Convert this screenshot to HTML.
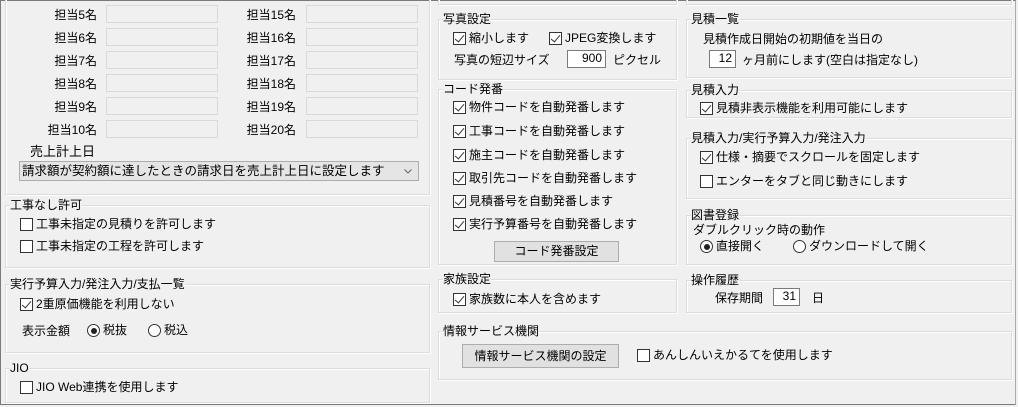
<html><head><style>
body{margin:0;width:1018px;height:407px;background:#f0f0f0;font-family:"Liberation Sans","Noto Sans CJK JP",sans-serif;font-size:12px;color:#000;position:relative;overflow:hidden}
.f{position:absolute;left:0;top:0;width:1016px;height:405px;border:1px solid #7a7a7a;border-right-color:#aaa}
div{position:absolute;box-sizing:border-box}
.g{border:1px solid #dcdcdc;box-shadow:inset 1px 1px 0 #fff,1px 1px 0 #fff}
.t{white-space:nowrap;line-height:14px}
.i{background:#f0f0f0;border:1px solid #d9d9d9;height:18px}
.w{background:#fff;border:1px solid #7a7a7a;text-align:right;padding-right:3px;line-height:15px;height:18px}
.cb{width:13px;height:13px;border:1px solid #333;background:#fff}
.cb.c::after{content:"";position:absolute;left:3px;top:0px;width:4px;height:8px;border:solid #333;border-width:0 1.3px 1.3px 0;transform:rotate(40deg)}
.r{width:13px;height:13px;border:1px solid #333;border-radius:50%;background:#fff}
.r.c::after{content:"";position:absolute;left:2.5px;top:2.5px;width:6px;height:6px;border-radius:50%;background:#222}
.b{background:#e1e1e1;border:1px solid #adadad;text-align:center}
.rt{text-align:right;width:70px}
</style></head><body><div class="f"></div>
<div class="g" style="left:5px;top:-2px;width:425px;height:197px"></div>
<div class="t rt" style="left:27px;top:8px">担当5名</div><div class="i" style="left:106px;top:5px;width:112px"></div>
<div class="t rt" style="left:27px;top:31px">担当6名</div><div class="i" style="left:106px;top:28px;width:112px"></div>
<div class="t rt" style="left:27px;top:54px">担当7名</div><div class="i" style="left:106px;top:51px;width:112px"></div>
<div class="t rt" style="left:27px;top:77px">担当8名</div><div class="i" style="left:106px;top:74px;width:112px"></div>
<div class="t rt" style="left:27px;top:100px">担当9名</div><div class="i" style="left:106px;top:97px;width:112px"></div>
<div class="t rt" style="left:27px;top:123px">担当10名</div><div class="i" style="left:106px;top:120px;width:112px"></div>
<div class="t rt" style="left:226px;top:8px">担当15名</div><div class="i" style="left:306px;top:5px;width:112px"></div>
<div class="t rt" style="left:226px;top:31px">担当16名</div><div class="i" style="left:306px;top:28px;width:112px"></div>
<div class="t rt" style="left:226px;top:54px">担当17名</div><div class="i" style="left:306px;top:51px;width:112px"></div>
<div class="t rt" style="left:226px;top:77px">担当18名</div><div class="i" style="left:306px;top:74px;width:112px"></div>
<div class="t rt" style="left:226px;top:100px">担当19名</div><div class="i" style="left:306px;top:97px;width:112px"></div>
<div class="t rt" style="left:226px;top:123px">担当20名</div><div class="i" style="left:306px;top:120px;width:112px"></div>
<div class="t" style="left:30px;top:145px;font-size:13px">売上計上日</div>
<div class="i" style="left:19px;top:161px;width:400px;height:20px;background:#e5e5e5;border-color:#adadad"><div class="t" style="left:2px;top:2px;font-size:12.5px">請求額が契約額に達したときの請求日を売上計上日に設定します</div><svg style="position:absolute;right:6px;top:7px" width="8" height="5"><path d="M0.5 0.5L4 4L7.5 0.5" fill="none" stroke="#666"/></svg></div>

<div class="g" style="left:5px;top:205px;width:425px;height:63px"></div>
<div class="t" style="left:10px;top:198px;background:#f0f0f0">工事なし許可</div>
<div class="cb" style="left:20px;top:218px"></div><div class="t" style="left:36px;top:217px">工事未指定の見積りを許可します</div>
<div class="cb" style="left:20px;top:240px"></div><div class="t" style="left:36px;top:239px">工事未指定の工程を許可します</div>

<div class="g" style="left:5px;top:284px;width:425px;height:69px"></div>
<div class="t" style="left:10px;top:277px;background:#f0f0f0">実行予算入力/発注入力/支払一覧</div>
<div class="cb c" style="left:20px;top:298px"></div><div class="t" style="left:36px;top:297px">2重原価機能を利用しない</div>
<div class="t" style="left:22px;top:324px">表示金額</div>
<div class="r c" style="left:87px;top:324px"></div><div class="t" style="left:103px;top:323px">税抜</div>
<div class="r" style="left:148px;top:324px"></div><div class="t" style="left:164px;top:323px">税込</div>

<div class="g" style="left:5px;top:368px;width:425px;height:35px"></div>
<div class="t" style="left:10px;top:361px;background:#f0f0f0">JIO</div>
<div class="cb" style="left:20px;top:381px"></div><div class="t" style="left:36px;top:380px">JIO Web連携を使用します</div>

<div class="g" style="left:438px;top:-2px;width:239px;height:7px"></div>
<div class="g" style="left:438px;top:19px;width:239px;height:61px"></div>
<div class="t" style="left:443px;top:12px;background:#f0f0f0">写真設定</div>
<div class="cb c" style="left:453px;top:32px"></div><div class="t" style="left:469px;top:31px">縮小します</div>
<div class="cb c" style="left:549px;top:32px"></div><div class="t" style="left:565px;top:31px">JPEG変換します</div>
<div class="t" style="left:454px;top:53px">写真の短辺サイズ</div>
<div class="w" style="left:567px;top:50px;width:39px">900</div>
<div class="t" style="left:613px;top:53px">ピクセル</div>

<div class="g" style="left:438px;top:89px;width:239px;height:176px"></div>
<div class="t" style="left:443px;top:82px;background:#f0f0f0">コード発番</div>
<div class="cb c" style="left:453px;top:101px"></div><div class="t" style="left:469px;top:100px">物件コードを自動発番します</div>
<div class="cb c" style="left:453px;top:125px"></div><div class="t" style="left:469px;top:124px">工事コードを自動発番します</div>
<div class="cb c" style="left:453px;top:149px"></div><div class="t" style="left:469px;top:148px">施主コードを自動発番します</div>
<div class="cb c" style="left:453px;top:172px"></div><div class="t" style="left:469px;top:171px">取引先コードを自動発番します</div>
<div class="cb c" style="left:453px;top:195px"></div><div class="t" style="left:469px;top:194px">見積番号を自動発番します</div>
<div class="cb c" style="left:453px;top:218px"></div><div class="t" style="left:469px;top:217px">実行予算番号を自動発番します</div>
<div class="b t" style="left:494px;top:241px;width:125px;height:21px;line-height:19px">コード発番設定</div>

<div class="g" style="left:438px;top:279px;width:239px;height:34px"></div>
<div class="t" style="left:443px;top:272px;background:#f0f0f0">家族設定</div>
<div class="cb c" style="left:453px;top:293px"></div><div class="t" style="left:469px;top:292px">家族数に本人を含めます</div>

<div class="g" style="left:438px;top:331px;width:574px;height:49px"></div>
<div class="t" style="left:443px;top:324px;background:#f0f0f0">情報サービス機関</div>
<div class="b t" style="left:462px;top:344px;width:157px;height:24px;line-height:22px">情報サービス機関の設定</div>
<div class="cb" style="left:637px;top:349px"></div><div class="t" style="left:653px;top:348px">あんしんいえかるてを使用します</div>

<div class="g" style="left:686px;top:-2px;width:326px;height:7px"></div>
<div class="g" style="left:686px;top:19px;width:326px;height:59px"></div>
<div class="t" style="left:691px;top:12px;background:#f0f0f0">見積一覧</div>
<div class="t" style="left:703px;top:32px">見積作成日開始の初期値を当日の</div>
<div class="w" style="left:709px;top:50px;width:27px">12</div>
<div class="t" style="left:742px;top:53px">ヶ月前にします(空白は指定なし)</div>

<div class="g" style="left:686px;top:90px;width:326px;height:28px"></div>
<div class="t" style="left:691px;top:83px;background:#f0f0f0">見積入力</div>
<div class="cb c" style="left:700px;top:102px"></div><div class="t" style="left:716px;top:101px">見積非表示機能を利用可能にします</div>

<div class="g" style="left:686px;top:138px;width:326px;height:61px"></div>
<div class="t" style="left:691px;top:131px;background:#f0f0f0">見積入力/実行予算入力/発注入力</div>
<div class="cb c" style="left:700px;top:151px"></div><div class="t" style="left:716px;top:150px">仕様・摘要でスクロールを固定します</div>
<div class="cb" style="left:700px;top:175px"></div><div class="t" style="left:716px;top:174px">エンターをタブと同じ動きにします</div>

<div class="g" style="left:686px;top:215px;width:326px;height:50px"></div>
<div class="t" style="left:691px;top:208px;background:#f0f0f0">図書登録</div>
<div class="t" style="left:693px;top:223px">ダブルクリック時の動作</div>
<div class="r c" style="left:700px;top:240px"></div><div class="t" style="left:716px;top:239px">直接開く</div>
<div class="r" style="left:793px;top:240px"></div><div class="t" style="left:809px;top:239px">ダウンロードして開く</div>

<div class="g" style="left:686px;top:280px;width:326px;height:33px"></div>
<div class="t" style="left:691px;top:273px;background:#f0f0f0">操作履歴</div>
<div class="t" style="left:715px;top:291px">保存期間</div>
<div class="w" style="left:773px;top:288px;width:27px">31</div>
<div class="t" style="left:812px;top:291px">日</div>
</body></html>
